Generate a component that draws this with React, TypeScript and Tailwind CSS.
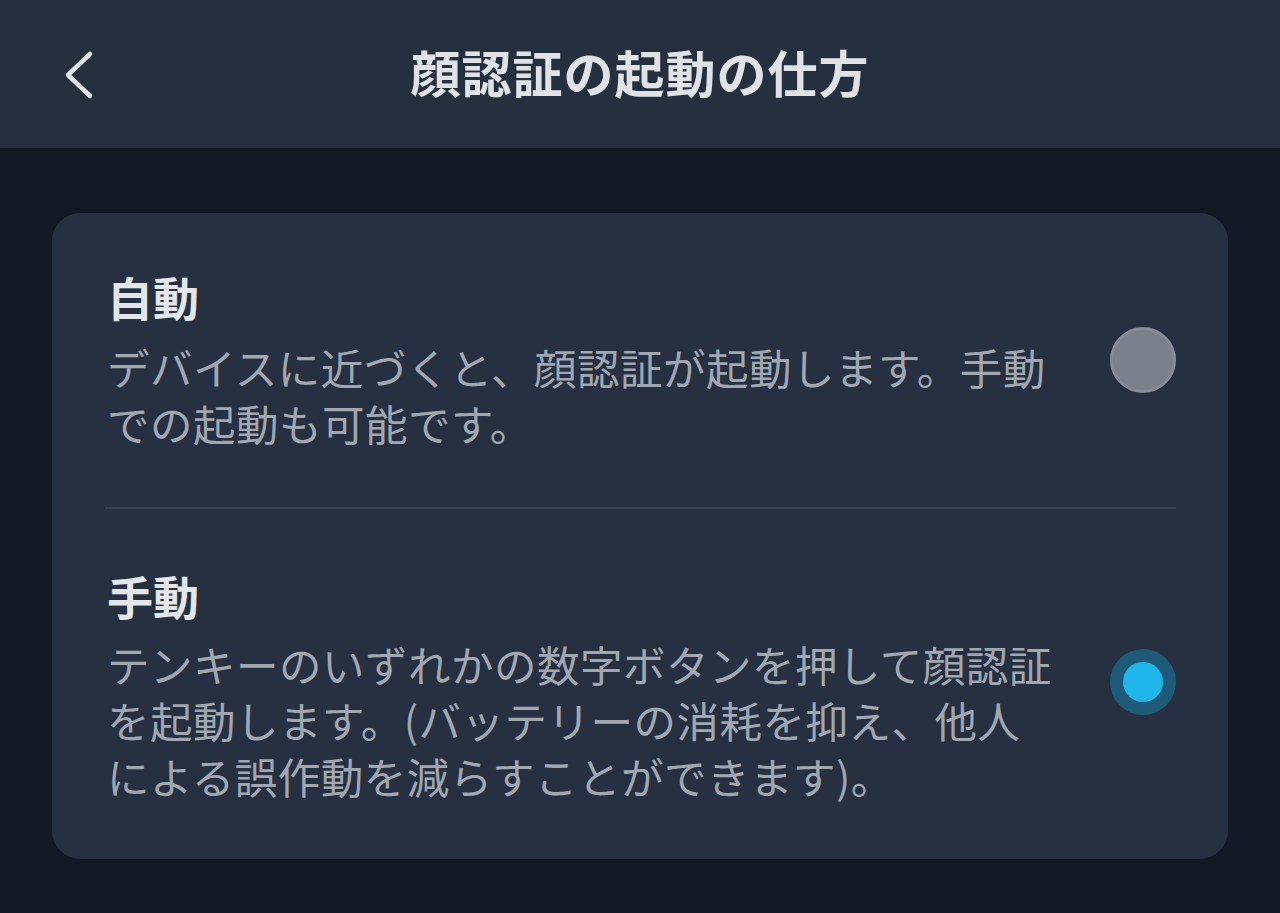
import React from "react";

const font = { fontFamily: '"Noto Sans CJK JP", "Noto Sans", sans-serif' };

export default function App() {
  return (
    <div className="w-[1280px] h-[913px] bg-[#121924] overflow-hidden" style={font}>
      <header className="relative h-[148px] bg-[#262f3e] flex items-center justify-center">
        <button className="absolute left-[58px] top-[50px] w-[40px] h-[50px] flex items-center justify-center">
          <svg width="36" height="50" viewBox="0 0 36 50" fill="none">
            <path d="M30 4 L8 25 L30 46" stroke="#dfe3e8" strokeWidth="4.5" strokeLinecap="round" strokeLinejoin="round" />
          </svg>
        </button>
        <h1 className="text-[50px] font-bold text-[#dfe3e8] leading-none tracking-[1px] -mt-[6px]">顔認証の起動の仕方</h1>
      </header>
      <div className="px-[52px] pt-[65px]">
        <div className="bg-[#263041] rounded-[28px] pl-[55px] pr-[52px] pt-[51px] pb-[55px]">
          <div className="flex items-center justify-between">
            <div className="w-[950px]">
              <div className="text-[46px] font-bold text-[#e3e6ea] leading-[64px]">自動</div>
              <p className="mt-[11px] text-[42.5px] tracking-[0.5px] text-[#a0a7b1] leading-[56px]">
                デバイスに近づくと、顔認証が起動します。手動での起動も可能です。
              </p>
            </div>
            <div className="w-[66px] h-[66px] rounded-full bg-[#7a818d] border-[3px] border-[#858c97] shrink-0 mt-[4px]" />
          </div>
          <div className="h-[2px] bg-[#364050] mt-[56px] -ml-[2px]" />
          <div className="flex items-center justify-between mt-[54px]">
            <div className="w-[950px]">
              <div className="text-[46px] font-bold text-[#e3e6ea] leading-[64px]">手動</div>
              <p className="mt-[9px] text-[42.5px] tracking-[0.5px] text-[#a0a7b1] leading-[56px]">
                テンキーのいずれかの数字ボタンを押して顔認証を起動します。(バッテリーの消耗を抑え、他人による誤作動を減らすことができます)。
              </p>
            </div>
            <div className="w-[66px] h-[66px] rounded-full bg-[#1d5b78] flex items-center justify-center shrink-0 mt-[-4px]">
              <div className="w-[40px] h-[40px] rounded-full bg-[#20b6ea]" />
            </div>
          </div>
        </div>
      </div>
    </div>
  );
}
